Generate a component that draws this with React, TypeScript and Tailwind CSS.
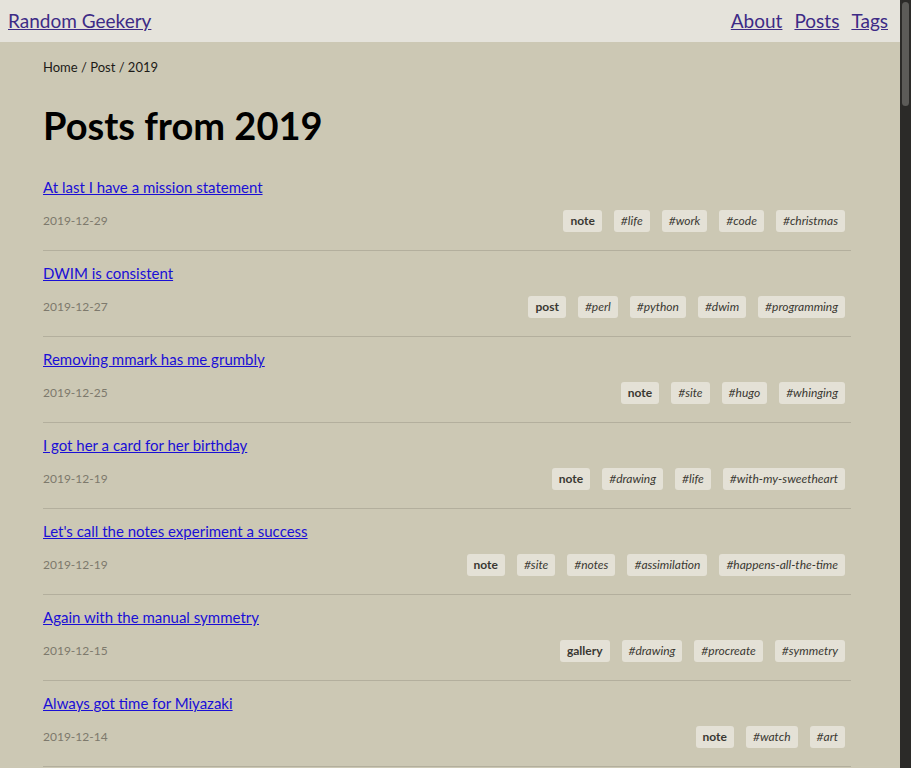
const posts = [
  { title: "At last I have a mission statement", date: "2019-12-29", kind: "note", tags: ["life", "work", "code", "christmas"] },
  { title: "DWIM is consistent", date: "2019-12-27", kind: "post", tags: ["perl", "python", "dwim", "programming"] },
  { title: "Removing mmark has me grumbly", date: "2019-12-25", kind: "note", tags: ["site", "hugo", "whinging"] },
  { title: "I got her a card for her birthday", date: "2019-12-19", kind: "note", tags: ["drawing", "life", "with-my-sweetheart"] },
  { title: "Let's call the notes experiment a success", date: "2019-12-19", kind: "note", tags: ["site", "notes", "assimilation", "happens-all-the-time"] },
  { title: "Again with the manual symmetry", date: "2019-12-15", kind: "gallery", tags: ["drawing", "procreate", "symmetry"] },
  { title: "Always got time for Miyazaki", date: "2019-12-14", kind: "note", tags: ["watch", "art"] },
];

function Chip({ children, strong }: { children: React.ReactNode; strong?: boolean }) {
  return (
    <span
      className={
        "rounded-[3px] bg-[#e4e1d6] px-[7px] py-[3px] text-[12px] leading-[16px] text-[#3a3832] " +
        (strong ? "font-bold" : "italic")
      }
    >
      {children}
    </span>
  );
}

function PostRow({ post }: { post: (typeof posts)[number] }) {
  return (
    <article className="border-b border-[#b3af9d] pt-[10px] pb-[18px]">
      <a href="#" className="text-[15px] leading-[22px] text-[#1a0fd6] underline">
        {post.title}
      </a>
      <div className="mt-[11px] flex items-center justify-between pr-[6px]">
        <span className="text-[12px] text-[#7d796c]">{post.date}</span>
        <div className="flex items-center gap-[12px]">
          <Chip strong>{post.kind}</Chip>
          {post.tags.map((t) => (
            <Chip key={t}>#{t}</Chip>
          ))}
        </div>
      </div>
    </article>
  );
}

export default function App() {
  return (
    <div className="flex h-[768px] overflow-hidden bg-[#ccc8b4] font-['Lato',sans-serif]">
      <div className="flex-1 min-w-0">
        <header className="flex h-[42px] items-center justify-between bg-[#e5e3db] pl-[8px] pr-[12px]">
          <a href="#" className="text-[19px] text-[#3d2b86] underline">Random Geekery</a>
          <nav className="flex gap-[12px] text-[19px] text-[#3d2b86]">
            <a href="#" className="underline">About</a>
            <a href="#" className="underline">Posts</a>
            <a href="#" className="underline">Tags</a>
          </nav>
        </header>
        <main className="pl-[43px] pr-[49px]">
          <div className="pt-[16px] text-[13px] text-[#1c1b18]">Home / Post / 2019</div>
          <h1 className="mt-[24px] mb-[17px] text-[38px] font-bold leading-[46px] text-black">Posts from 2019</h1>
          {posts.map((p) => (
            <PostRow key={p.title} post={p} />
          ))}
        </main>
      </div>
      <aside className="w-[11px] shrink-0 bg-[#2b2a28] pt-[2px] pl-[2px] pr-[2px]">
        <div className="h-[104px] rounded-full bg-[#5c5b58]" />
      </aside>
    </div>
  );
}
